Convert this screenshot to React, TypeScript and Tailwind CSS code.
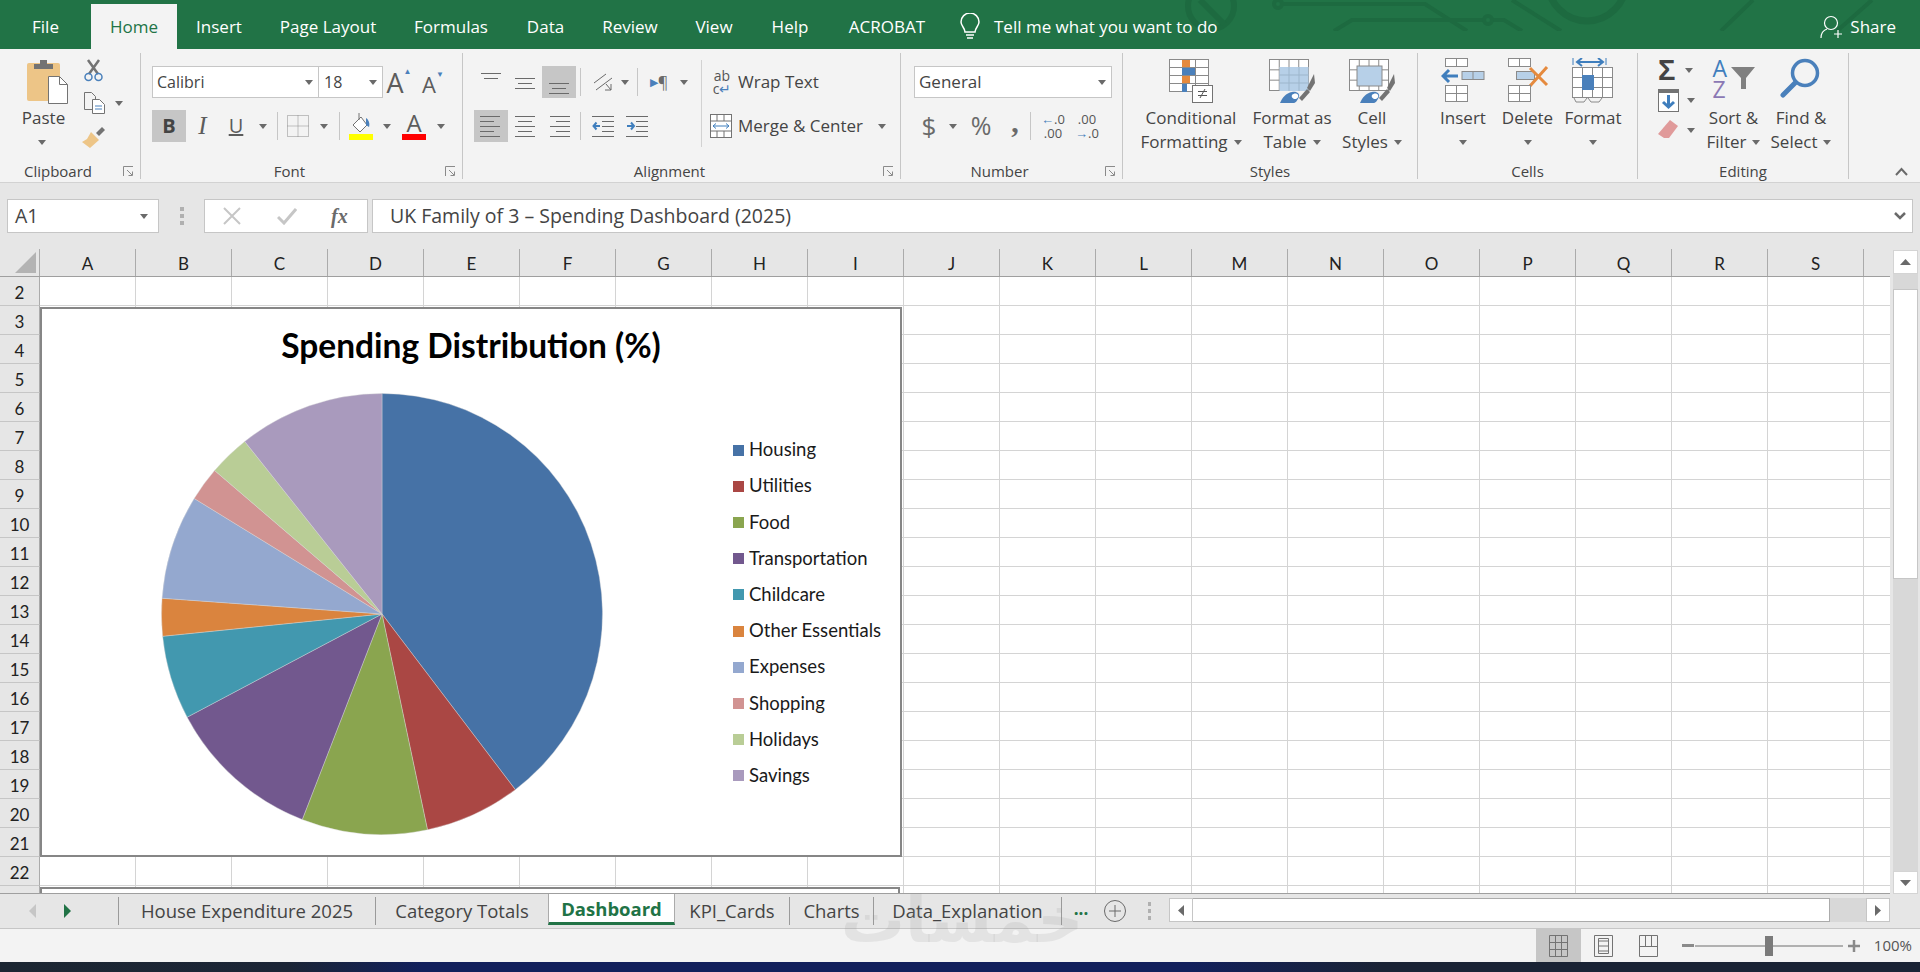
import type { ReactNode } from "react";

const TABS = [
  { label: "File", w: "w-[91px]" },
  { label: "Home", w: "w-[86px]", active: true },
  { label: "Insert", w: "w-[84px]" },
  { label: "Page Layout", w: "w-[134px]" },
  { label: "Formulas", w: "w-[112px]" },
  { label: "Data", w: "w-[77px]" },
  { label: "Review", w: "w-[92px]" },
  { label: "View", w: "w-[76px]" },
  { label: "Help", w: "w-[76px]" },
  { label: "ACROBAT", w: "w-[118px]" },
];

const COLS = "ABCDEFGHIJKLMNOPQRS".split("");
const ROWS = Array.from({ length: 22 }, (_, i) => i + 2);

const SLICES = [
  { name: "Housing", color: "#4672a6", end: 142.8 },
  { name: "Utilities", color: "#aa4744", end: 168.1 },
  { name: "Food", color: "#8aa54f", end: 201.2 },
  { name: "Transportation", color: "#72588e", end: 242.1 },
  { name: "Childcare", color: "#4298af", end: 264.2 },
  { name: "Other Essentials", color: "#da843e", end: 274.1 },
  { name: "Expenses", color: "#94a8cf", end: 301.6 },
  { name: "Shopping", color: "#d19392", end: 310.6 },
  { name: "Holidays", color: "#b9cd96", end: 321.5 },
  { name: "Savings", color: "#a99abd", end: 360 },
];

function slicePath(start: number, end: number) {
  const r = 220.5;
  const c = 221;
  const pt = (a: number) => {
    const t = (a * Math.PI) / 180;
    return `${(c + r * Math.sin(t)).toFixed(2)} ${(c - r * Math.cos(t)).toFixed(2)}`;
  };
  const large = end - start > 180 ? 1 : 0;
  return `M${c} ${c} L${pt(start)} A${r} ${r} 0 ${large} 1 ${pt(end)} Z`;
}

function Caret({ color = "#6a6a6a" }: { color?: string }) {
  return (
    <svg width="8" height="5" viewBox="0 0 8 5" className="shrink-0">
      <path d="M0 0h8L4 5z" fill={color} />
    </svg>
  );
}

function Launcher() {
  return (
    <svg width="11" height="11" viewBox="0 0 11 11" fill="none" stroke="#8a8a8a">
      <path d="M.5 10V.5H10" />
      <path d="M4 4l5 5M9.5 5.5v4h-4" />
    </svg>
  );
}

/* ── Ribbon group shell ─────────────────────────────────────── */
function Group({ w, label, launcher, children }: { w: string; label: string; launcher?: boolean; children: ReactNode }) {
  return (
    <div className={`${w} shrink-0 h-[126px] flex flex-col border-r border-[#c6c6c6]`}>
      <div className="h-[110px] flex">{children}</div>
      <div className="h-[16px] flex items-center text-[15px] text-[#444]">
        <span className="flex-1 text-center">{label}</span>
        {launcher && <span className="w-[24px] flex justify-center"><Launcher /></span>}
      </div>
    </div>
  );
}

function BigButton({ w, icon, lines }: { w: string; icon: ReactNode; lines: ReactNode[] }) {
  return (
    <div className={`${w} shrink-0 flex flex-col items-center`}>
      <div className="h-[53px] pt-[5px] flex justify-center">{icon}</div>
      {lines.map((l, i) => (
        <div key={i} className="h-[24px] flex items-center gap-[6px] text-[17px] text-[#444] whitespace-nowrap">{l}</div>
      ))}
    </div>
  );
}

function Cell({ w, on, children }: { w: string; on?: boolean; children?: ReactNode }) {
  return <div className={`${w} h-[32px] shrink-0 flex items-center justify-center ${on ? "bg-[#c6c6c6]" : ""}`}>{children}</div>;
}

function Sep({ ml = "ml-0", mr = "mr-0" }: { ml?: string; mr?: string }) {
  return <div className={`w-px h-[28px] bg-[#c6c6c6] shrink-0 ${ml} ${mr}`} />;
}

function LinesIcon({ lines }: { lines: [number, number, number][] }) {
  return (
    <svg width="22" height="24" viewBox="0 0 22 24" stroke="#6a6a6a" strokeWidth="1">
      {lines.map(([a, b, y], i) => <line key={i} x1={a} x2={b} y1={y + 0.5} y2={y + 0.5} />)}
    </svg>
  );
}

function IndentIcon({ flip }: { flip?: boolean }) {
  return (
    <svg width="22" height="24" viewBox="0 0 22 24" stroke="#6a6a6a">
      {[2, 22].map((y) => <line key={y} x1="0" x2="22" y1={y + 0.5} y2={y + 0.5} />)}
      {[7, 12, 17].map((y) => <line key={y} x1="10" x2="22" y1={y + 0.5} y2={y + 0.5} />)}
      <path d={flip ? "M1 12h6M5 8.5L8 12l-3 3.5" : "M8 12H2M4.5 8.5L1.5 12l3 3.5"} fill="none" stroke="#3f7ebd" strokeWidth="2" />
    </svg>
  );
}

/* ── Big ribbon icons ───────────────────────────────────────── */
function PasteIcon() {
  return (
    <svg width="42" height="45" viewBox="0 0 42 45">
      <rect x="0" y="4" width="33" height="38" rx="2" fill="#edc587" />
      <path d="M7 10V5h6V1h7v4h6v5z" fill="#737373" />
      <path d="M21.5 17.5h11l8 8v19h-19z" fill="#fff" stroke="#737373" />
      <path d="M32.5 17.5v8h8" fill="none" stroke="#737373" />
    </svg>
  );
}

function Grid({ x, y, w, h, cols, rows, stroke = "#8a8a8a" }: { x: number; y: number; w: number; h: number; cols: number; rows: number; stroke?: string }) {
  const cells = [];
  for (let i = 1; i < cols; i++) cells.push(<line key={`c${i}`} x1={x + (w * i) / cols} x2={x + (w * i) / cols} y1={y} y2={y + h} />);
  for (let i = 1; i < rows; i++) cells.push(<line key={`r${i}`} x1={x} x2={x + w} y1={y + (h * i) / rows} y2={y + (h * i) / rows} />);
  return (
    <g stroke={stroke} fill="none">
      <rect x={x} y={y} width={w} height={h} fill="#fff" />
      {cells}
    </g>
  );
}

function CondIcon() {
  return (
    <svg width="44" height="45" viewBox="0 0 44 45">
      <Grid x={0.5} y={1.5} w={39} h={32} cols={3} rows={4} />
      <rect x="13" y="2" width="8" height="7" fill="#e58a3e" />
      <rect x="13" y="10" width="13" height="7" fill="#4a80bb" />
      <rect x="13" y="18" width="8" height="7" fill="#e58a3e" />
      <rect x="13" y="26" width="5" height="8" fill="#4a80bb" />
      <rect x="23.5" y="27.5" width="20" height="17" fill="#fff" stroke="#737373" />
      <path d="M29 33.500h9M29 37.500h9M36 31l-5 9" stroke="#555" fill="none" />
    </svg>
  );
}

function Brush() {
  return (
    <g>
      <path d="M30 40l3 3 8-9-3-3z" fill="#737373" />
      <path d="M38 30l7-14 1 9-5 8z" fill="#737373" />
      <path d="M11 45c2-5 6-10 12-11 5-1 8 2 7 5-1 2-3 6-5 6z" fill="#4a80bb" />
      <path d="M23 37c2-2 5-2 6 0s-1 4-3 4-4-2-3-4z" fill="#fff" />
    </g>
  );
}

function FormatTableIcon() {
  return (
    <svg width="46" height="46" viewBox="0 0 46 46">
      <Grid x={0.5} y={1.5} w={39} h={31} cols={4} rows={3} />
      <rect x="10.5" y="9" width="29" height="24" fill="#b7d0e8" />
      <path d="M20 9v24M30 9v24M10 17h30M10 25h30" stroke="#9db6cc" />
      <Brush />
    </svg>
  );
}

function CellStylesIcon() {
  return (
    <svg width="46" height="46" viewBox="0 0 46 46">
      <Grid x={0.5} y={1.5} w={39} h={31} cols={4} rows={3} />
      <rect x="8" y="8" width="25" height="20" fill="#b7d0e8" stroke="#8a8a8a" />
      <Brush />
    </svg>
  );
}

function InsertIcon() {
  return (
    <svg width="44" height="45" viewBox="0 0 44 45">
      <Grid x={4.5} y={0.5} w={22} h={8} cols={2} rows={1} />
      <rect x="21" y="13.5" width="22" height="8" fill="#b7d0e8" stroke="#8a8a8a" />
      <path d="M32 13.5v8" stroke="#8a8a8a" />
      <path d="M17 18H3M8 12l-6 6 6 6" fill="none" stroke="#3f7ebd" strokeWidth="3" />
      <Grid x={4.5} y={27.5} w={22} h={16} cols={2} rows={2} />
    </svg>
  );
}

function DeleteIcon() {
  return (
    <svg width="44" height="45" viewBox="0 0 44 45">
      <Grid x={2.5} y={0.5} w={22} h={8} cols={2} rows={1} />
      <rect x="10.5" y="13.5" width="18" height="8" fill="#b7d0e8" stroke="#8a8a8a" />
      <path d="M24 10l17 17M41 9L24 28" stroke="#e58a3e" strokeWidth="3" fill="none" />
      <Grid x={2.5} y={27.5} w={22} h={16} cols={2} rows={2} />
    </svg>
  );
}

function FormatIcon() {
  return (
    <svg width="42" height="45" viewBox="0 0 42 45">
      <path d="M1 0v7M34 0v7" stroke="#3f7ebd" />
      <path d="M5 4h26M10 0L5 4l5 4M26 0l5 4-5 4" fill="none" stroke="#3f7ebd" strokeWidth="2" />
      <Grid x={0.5} y={9.5} w={40} h={30} cols={4} rows={3} />
      <rect x="10" y="17" width="12" height="15" fill="#4a80bb" />
      <path d="M2 40l2 4h8l3-4M16 40l3 4h8l3-4" fill="none" stroke="#8a8a8a" />
    </svg>
  );
}

function SortIcon() {
  return (
    <div className="flex h-[42px] items-start">
      <div className="flex flex-col w-[18px] text-[23px] leading-[21px]">
        <span className="text-[#3f7ebd]">A</span>
        <span className="text-[#8b78b4]">Z</span>
      </div>
      <svg width="24" height="24" viewBox="0 0 24 24" className="mt-[9px]">
        <path d="M0 0h24l-9 11v11h-5V11z" fill="#808080" />
      </svg>
    </div>
  );
}

function FindIcon() {
  return (
    <svg width="42" height="40" viewBox="0 0 42 40" fill="none" stroke="#4a80bb">
      <circle cx="25" cy="15" r="12.5" strokeWidth="3.5" />
      <path d="M15 25L3 37" strokeWidth="5" strokeLinecap="round" />
    </svg>
  );
}

/* ── Ribbon ─────────────────────────────────────────────────── */
function Ribbon() {
  return (
    <div className="h-[134px] bg-[#f3f3f3] border-b border-[#d2d2d2] pt-[4px] flex shrink-0">
      <Group w="w-[141px]" label="Clipboard" launcher>
        <div className="w-[84px] flex flex-col items-center">
          <div className="h-[53px] pt-[6px] pl-[12px]"><PasteIcon /></div>
          <div className="h-[24px] flex items-center text-[17px] text-[#444] ml-[3px]">Paste</div>
          <div className="h-[24px] flex items-center"><Caret /></div>
        </div>
        <div className="flex flex-col pt-[6px] w-[40px]">
          <svg width="20" height="23" viewBox="0 0 20 23" fill="none">
            <path d="M4 1l10 14M15 1L5 15" stroke="#737373" strokeWidth="2.5" />
            <circle cx="4.5" cy="18" r="3.5" stroke="#4a80bb" strokeWidth="1.5" />
            <circle cx="14.5" cy="18" r="3.5" stroke="#4a80bb" strokeWidth="1.5" />
          </svg>
          <div className="flex items-center gap-[10px] mt-[10px]">
            <svg width="21" height="22" viewBox="0 0 21 22" fill="none" stroke="#737373">
              <path d="M.5.5h7l4 4v13H.5z" fill="#f3f3f3" />
              <path d="M8.5 7.500h7l5 5v9h-12z" fill="#fff" />
              <path d="M11 14h7M11 17h7" stroke="#4a80bb" />
            </svg>
            <Caret />
          </div>
          <svg width="24" height="22" viewBox="0 0 24 22" className="mt-[13px] -ml-[2px]">
            <path d="M14 6l6-6 3 3-6 6z" fill="#737373" />
            <path d="M9 5l8 8-9 8-8-6 5-3z" fill="#edc587" />
          </svg>
        </div>
      </Group>

      <Group w="w-[322px]" label="Font" launcher>
        <div className="pl-[11px] pt-[13px] flex flex-col gap-[12px]">
          <div className="flex items-center">
            <div className="w-[167px] h-[32px] bg-white border border-[#c6c6c6] flex items-center justify-between pl-[4px] pr-[5px] text-[16px] text-[#444]">
              Calibri <Caret />
            </div>
            <div className="w-[64px] h-[32px] bg-white border border-l-0 border-[#c6c6c6] flex items-center justify-between pl-[5px] pr-[5px] text-[16px] text-[#444]">
              18 <Caret />
            </div>
            <div className="w-[32px] h-[30px] flex items-end justify-center text-[27px] leading-[28px] text-[#5c5c5c]">A<span className="self-start text-[#4a80bb] text-[8px] leading-none">▲</span></div>
            <div className="w-[32px] h-[30px] ml-[2px] flex items-end justify-center text-[22px] leading-[26px] text-[#5c5c5c]">A<span className="self-start mt-[3px] text-[#4a80bb] text-[8px] leading-none">▼</span></div>
          </div>
          <div className="flex items-center">
            <Cell w="w-[34px]" on><span className="text-[20px] font-bold text-[#444]">B</span></Cell>
            <Cell w="w-[33px]"><span className="font-['Liberation_Serif',serif] italic text-[25px] text-[#5c5c5c]">I</span></Cell>
            <Cell w="w-[34px]"><span className="underline text-[20px] text-[#5c5c5c]">U</span></Cell>
            <Cell w="w-[20px]"><Caret /></Cell>
            <Sep ml="ml-[4px]" mr="mr-[5px]" />
            <Cell w="w-[30px]">
              <svg width="22" height="22" viewBox="0 0 22 22" fill="none" stroke="#8a8a8a" strokeDasharray="1 1">
                <path d="M.5.5h21v21H.5zM11 .5v21M.5 11h21" />
              </svg>
            </Cell>
            <Cell w="w-[22px]"><Caret /></Cell>
            <Sep ml="ml-[4px]" mr="mr-[5px]" />
            <Cell w="w-[32px]">
              <svg width="24" height="28" viewBox="0 0 24 28">
                <path d="M4 13l8-8 6 8-7 7z" fill="#fff" stroke="#737373" />
                <path d="M10 1v7" stroke="#737373" />
                <path d="M17 6c3 2 4 6 3 9l-3-2z" fill="#4a80bb" />
                <rect y="22" width="24" height="6" fill="#ffff00" />
              </svg>
            </Cell>
            <Cell w="w-[20px]"><Caret /></Cell>
            <Cell w="w-[34px]">
              <div className="flex flex-col items-center">
                <span className="text-[24px] leading-[22px] text-[#5c5c5c]">A</span>
                <div className="w-[24px] h-[6px] bg-[#ff0000]" />
              </div>
            </Cell>
            <Cell w="w-[20px]"><Caret /></Cell>
          </div>
        </div>
      </Group>

      <Group w="w-[438px]" label="Alignment" launcher>
        <div className="w-[238px] pl-[11px] pt-[13px] flex flex-col gap-[12px]">
          <div className="flex items-center">
            <Cell w="w-[34px]"><LinesIcon lines={[[1, 21, 3], [4, 18, 8]]} /></Cell>
            <Cell w="w-[34px]"><LinesIcon lines={[[1, 21, 8], [4, 18, 13], [1, 21, 18]]} /></Cell>
            <Cell w="w-[34px]" on><LinesIcon lines={[[1, 21, 13], [4, 18, 18], [1, 21, 23]]} /></Cell>
            <Sep ml="ml-[4px]" mr="mr-[5px]" />
            <Cell w="w-[34px]">
              <svg width="24" height="24" viewBox="0 0 24 24" fill="none" stroke="#6a6a6a">
                <path d="M3 13l12-9M5 20l16-12M15 14l5 6M20 14v6h-6" />
              </svg>
            </Cell>
            <Cell w="w-[10px]"><Caret /></Cell>
            <Sep ml="ml-[7px]" mr="mr-[7px]" />
            <Cell w="w-[28px]"><span className="text-[#4a80bb] text-[11px]">▶</span><span className="text-[16px] text-[#6a6a6a]">¶</span></Cell>
            <Cell w="w-[22px]"><Caret /></Cell>
          </div>
          <div className="flex items-center">
            <Cell w="w-[34px]" on><LinesIcon lines={[[0, 20, 2], [0, 14, 7], [0, 20, 12], [0, 14, 17], [0, 20, 22]]} /></Cell>
            <Cell w="w-[34px]"><LinesIcon lines={[[1, 21, 2], [4, 18, 7], [1, 21, 12], [4, 18, 17], [1, 21, 22]]} /></Cell>
            <Cell w="w-[34px]"><LinesIcon lines={[[2, 22, 2], [8, 22, 7], [2, 22, 12], [8, 22, 17], [2, 22, 22]]} /></Cell>
            <Sep ml="ml-[4px]" mr="mr-[5px]" />
            <Cell w="w-[34px]"><IndentIcon /></Cell>
            <Cell w="w-[34px]"><IndentIcon flip /></Cell>
          </div>
        </div>
        <div className="w-px h-[87px] bg-[#d2d2d2] mt-[7px] shrink-0" />
        <div className="pt-[13px] pl-[8px] flex flex-col gap-[12px] text-[17px] text-[#444]">
          <div className="h-[32px] flex items-center gap-[5px] pl-[1px]">
            <span className="w-[22px] text-[14px] leading-[13px] text-[#555] text-center">ab<br />c<span className="text-[#4a80bb]">↵</span></span>
            <span>Wrap Text</span>
          </div>
          <div className="h-[32px] flex items-center gap-[6px]">
            <svg width="22" height="24" viewBox="0 0 22 24" fill="none" stroke="#737373">
              <rect x=".5" y=".5" width="21" height="23" fill="#fff" />
              <path d="M.5 7h21M.5 17h21M7 .5V7M14 .5V7M7 17v6.5M14 17v6.5" />
              <path d="M3 12h16M6 9.5L3 12l3 2.5M16 9.5l3 2.5-3 2.5" stroke="#3f7ebd" />
            </svg>
            <span className="whitespace-nowrap">Merge &amp; Center</span>
            <span className="ml-[9px]"><Caret /></span>
          </div>
        </div>
      </Group>

      <Group w="w-[222px]" label="Number" launcher>
        <div className="pl-[13px] pt-[13px] flex flex-col gap-[12px]">
          <div className="w-[198px] h-[32px] bg-white border border-[#c6c6c6] flex items-center justify-between pl-[4px] pr-[5px] text-[17px] text-[#444]">
            General <Caret />
          </div>
          <div className="flex items-center text-[#6a6a6a]">
            <Cell w="w-[30px]"><span className="text-[26px]">$</span></Cell>
            <Cell w="w-[18px]"><Caret /></Cell>
            <Cell w="w-[38px]"><span className="text-[25px]">%</span></Cell>
            <Cell w="w-[30px]"><span className="text-[30px] font-bold font-['Liberation_Serif',serif] -mt-[10px]">,</span></Cell>
            <Sep ml="ml-[0px]" mr="mr-[5px]" />
            <Cell w="w-[34px]">
              <div className="text-[13px] leading-[14px] text-center text-[#555]"><span className="text-[#4a80bb] font-bold">←</span>.0<br />.00</div>
            </Cell>
            <Cell w="w-[34px]">
              <div className="text-[13px] leading-[14px] text-center text-[#555]">.00<br /><span className="text-[#4a80bb] font-bold">→</span>.0</div>
            </Cell>
          </div>
        </div>
      </Group>

      <Group w="w-[295px]" label="Styles">
        <div className="pl-[13px] flex">
          <BigButton w="w-[110px]" icon={<CondIcon />} lines={["Conditional", <>Formatting <Caret /></>]} />
          <BigButton w="w-[92px]" icon={<FormatTableIcon />} lines={["Format as", <>Table <Caret /></>]} />
          <BigButton w="w-[68px]" icon={<CellStylesIcon />} lines={["Cell", <>Styles <Caret /></>]} />
        </div>
      </Group>

      <Group w="w-[220px]" label="Cells">
        <div className="pl-[13px] flex">
          <BigButton w="w-[64px]" icon={<InsertIcon />} lines={["Insert", <Caret />]} />
          <BigButton w="w-[65px]" icon={<DeleteIcon />} lines={["Delete", <Caret />]} />
          <BigButton w="w-[66px]" icon={<FormatIcon />} lines={["Format", <Caret />]} />
        </div>
      </Group>

      <Group w="w-[211px]" label="Editing">
        <div className="w-[62px] pl-[20px] pt-[5px] flex flex-col">
          <div className="h-[24px] flex items-center gap-[10px]">
            <span className="text-[29px] leading-none font-bold text-[#444] font-['Liberation_Sans',sans-serif]">Σ</span>
            <Caret />
          </div>
          <div className="h-[30px] mt-[3px] flex items-center gap-[8px]">
            <svg width="21" height="23" viewBox="0 0 21 23" className="shrink-0">
              <rect x=".5" y=".5" width="20" height="22" fill="#fff" stroke="#737373" />
              <rect width="21" height="4" fill="#737373" />
              <path d="M10.500 6v12M5 13l5.500 5 5.500-5" fill="none" stroke="#3f7ebd" strokeWidth="3" />
            </svg>
            <Caret />
          </div>
          <div className="h-[30px] flex items-center gap-[8px]">
            <svg width="21" height="20" viewBox="0 0 21 20" className="shrink-0">
              <path d="M12 0l8 6-9 12H6L0 14z" fill="#e09a9a" />
            </svg>
            <Caret />
          </div>
        </div>
        <BigButton w="w-[67px]" icon={<SortIcon />} lines={["Sort &", <>Filter <Caret /></>]} />
        <BigButton w="w-[68px]" icon={<FindIcon />} lines={["Find &", <>Select <Caret /></>]} />
      </Group>

      <div className="flex-1 h-[126px] flex items-end justify-end pr-[12px] pb-[3px]">
        <svg width="13" height="9" viewBox="0 0 13 9" fill="none" stroke="#6a6a6a" strokeWidth="2">
          <path d="M1 8l5.500-6L12 8" />
        </svg>
      </div>
    </div>
  );
}

/* ── Sheet ──────────────────────────────────────────────────── */
function PieChart() {
  let start = 0;
  return (
    <div className="absolute left-[40px] top-[58px] w-[862px] h-[550px] bg-white border-2 border-[#868686] font-['Lato',sans-serif]">
      <div className="h-[84px] pt-[12px] text-center text-[33.5px] leading-[48px] font-bold text-black">Spending Distribution (%)</div>
      <div className="flex">
        <svg width="442" height="442" viewBox="0 0 442 442" className="ml-[119px] shrink-0">
          {SLICES.map((s) => {
            const d = slicePath(start, s.end);
            start = s.end;
            return <path key={s.name} d={d} fill={s.color} stroke="#d9d9d9" strokeWidth="0.4" />;
          })}
        </svg>
        <div className="ml-[130px] mt-[39px]">
          {SLICES.map((s) => (
            <div key={s.name} className="h-[36.2px] flex items-center gap-[5px] text-[18.5px] text-[#1a1a1a] whitespace-nowrap">
              <span className="w-[11px] h-[11px] shrink-0" style={{ backgroundColor: s.color }} />
              {s.name}
            </div>
          ))}
        </div>
      </div>
    </div>
  );
}

function Sheet() {
  return (
    <div className="h-[645px] flex shrink-0">
      <div className="relative flex-1 overflow-hidden bg-white border-b border-[#9f9f9f] font-['Lato',sans-serif]">
        <div className="h-[28px] flex bg-[#e6e6e6] border-b border-[#9f9f9f] text-[17px] text-[#222]">
          <div className="w-[40px] shrink-0 border-r border-[#ababab] flex items-end justify-end pr-[3px] pb-[3px]">
            <svg width="21" height="21" viewBox="0 0 21 21"><path d="M21 0v21H0z" fill="#b3b3b3" /></svg>
          </div>
          {COLS.map((c) => (
            <div key={c} className="w-[96px] shrink-0 border-r border-[#ababab] flex items-center justify-center pt-[3px]">{c}</div>
          ))}
        </div>
        {ROWS.map((r) => (
          <div key={r} className="h-[29px] flex">
            <div className="w-[40px] shrink-0 bg-[#e6e6e6] border-r border-b border-r-[#ababab] border-b-[#c6c6c6] flex items-center justify-center pt-[3px] text-[17px] text-[#222]">
              {r === 23 ? "" : r}
            </div>
            {COLS.map((c) => (
              <div key={c} className="w-[96px] shrink-0 border-r border-b border-[#d4d4d4]" />
            ))}
            <div className="flex-1 border-b border-[#d4d4d4]" />
          </div>
        ))}
        <PieChart />
        <div className="absolute left-[40px] top-[638px] w-[860px] h-[40px] bg-white border-2 border-[#868686]" />
      </div>

      <div className="w-[30px] shrink-0 bg-[#e6e6e6] flex flex-col items-center pt-[1px]">
        <div className="w-[25px] h-[24px] bg-white border border-[#d4d4d4] flex items-center justify-center">
          <svg width="11" height="6" viewBox="0 0 11 6"><path d="M0 6h11L5.500 0z" fill="#6a6a6a" /></svg>
        </div>
        <div className="flex-1 w-[25px] bg-[#d8d8d8] pt-[15px]">
          <div className="h-[290px] bg-white border border-[#c6c6c6]" />
        </div>
        <div className="w-[25px] h-[23px] bg-white border border-[#d4d4d4] flex items-center justify-center">
          <svg width="11" height="6" viewBox="0 0 11 6"><path d="M0 0h11L5.500 6z" fill="#6a6a6a" /></svg>
        </div>
      </div>
    </div>
  );
}

function SheetTab({ w, label }: { w: string; label: string }) {
  return (
    <div className={`${w} h-[28px] mt-[3px] shrink-0 flex items-center justify-center border-r border-[#9a9a9a] text-[#444] text-[18.5px] whitespace-nowrap`}>
      {label}
    </div>
  );
}

function TabBar() {
  return (
    <div className="relative h-[35px] bg-[#e6e6e6] border-b border-[#c6c6c6] flex shrink-0">
      <div className="w-[119px] h-[28px] mt-[3px] shrink-0 flex items-center border-r border-[#9a9a9a]">
        <svg width="7" height="14" viewBox="0 0 7 14" className="ml-[29px]"><path d="M7 0v14L0 7z" fill="#c6c6c6" /></svg>
        <svg width="7" height="14" viewBox="0 0 7 14" className="ml-[28px]"><path d="M0 0v14l7-7z" fill="#217346" /></svg>
      </div>
      <SheetTab w="w-[257px]" label="House Expenditure 2025" />
      <div className="w-[172px] h-[28px] mt-[3px] shrink-0 flex items-center justify-center text-[#444] text-[18.5px]">Category Totals</div>
      <div className="w-[127px] h-[31px] shrink-0 bg-white border-x border-[#ababab] border-b-[3px] border-b-[#217346] flex items-center justify-center pt-[2px] text-[18.5px] font-bold text-[#217346]">
        Dashboard
      </div>
      <SheetTab w="w-[115px]" label="KPI_Cards" />
      <SheetTab w="w-[84px]" label="Charts" />
      <SheetTab w="w-[188px]" label="Data_Explanation" />
      <div className="w-[42px] shrink-0 flex items-center justify-center text-[#217346] font-bold text-[17px] pb-[4px] pr-[4px]">...</div>
      <div className="w-[22px] h-[22px] mt-[6px] shrink-0 rounded-full border border-[#6a6a6a] flex items-center justify-center">
        <svg width="12" height="12" viewBox="0 0 12 12" stroke="#6a6a6a"><path d="M6 0v12M0 6h12" /></svg>
      </div>
      <div className="w-[4px] mt-[8px] ml-[22px] flex flex-col gap-[3px] shrink-0">
        {[0, 1, 2].map((i) => <span key={i} className="w-[3px] h-[4px] bg-[#b0b0b0]" />)}
      </div>
      <div className="w-[24px] h-[24px] mt-[4px] ml-[17px] shrink-0 bg-white border border-[#c6c6c6] flex items-center justify-center">
        <svg width="6" height="11" viewBox="0 0 6 11"><path d="M6 0v11L0 5.500z" fill="#6a6a6a" /></svg>
      </div>
      <div className="w-[637px] h-[24px] mt-[4px] shrink-0 bg-white border border-l-0 border-[#ababab]" />
      <div className="w-[36px] h-[24px] mt-[4px] shrink-0 bg-[#d8d8d8]" />
      <div className="w-[24px] h-[24px] mt-[4px] shrink-0 bg-white border border-[#c6c6c6] flex items-center justify-center">
        <svg width="6" height="11" viewBox="0 0 6 11"><path d="M0 0v11l6-5.500z" fill="#6a6a6a" /></svg>
      </div>
    </div>
  );
}

function StatusBar() {
  return (
    <div className="h-[33px] bg-[#f3f3f3] flex justify-end shrink-0 text-[#555]">
      <div className="w-[45px] bg-[#c6c6c6] flex items-center justify-center">
        <svg width="19" height="22" viewBox="0 0 19 22" fill="none" stroke="#737373"><path d="M.5.5h18v21H.5zM6.500.5v21M12.500.5v21M.5 7.500h18M.5 14.500h18" /></svg>
      </div>
      <div className="w-[45px] flex items-center justify-center">
        <svg width="19" height="22" viewBox="0 0 19 22" fill="none" stroke="#737373"><path d="M.5.5h18v21H.5zM5 6h9M5 11h9M5 16h9M4.500 3.500h10v15h-10z" /></svg>
      </div>
      <div className="w-[45px] flex items-center justify-center">
        <svg width="19" height="22" viewBox="0 0 19 22" fill="none" stroke="#737373"><path d="M.5.5h18v21H.5zM6.500.5v11M12.500.5v11M.5 11.500h18" /></svg>
      </div>
      <div className="w-[12px] ml-[11px] flex items-center">
        <div className="w-[12px] h-[3px] bg-[#8a8a8a]" />
      </div>
      <div className="w-[148px] ml-[1px] flex items-center relative">
        <div className="w-full h-[2px] bg-[#b0b0b0]" />
        <div className="absolute left-[70px] w-[8px] h-[20px] bg-[#7a7a7a]" />
      </div>
      <div className="w-[12px] ml-[5px] flex items-center">
        <svg width="12" height="12" viewBox="0 0 12 12" stroke="#8a8a8a" strokeWidth="2.500"><path d="M6 0v12M0 6h12" /></svg>
      </div>
      <div className="w-[60px] flex items-center justify-end pr-[8px] text-[15px]">100%</div>
    </div>
  );
}

export default function App() {
  return (
    <div className="relative w-[1920px] h-[972px] overflow-hidden flex flex-col bg-[#f3f3f3] font-['Open_Sans',sans-serif]">
      {/* ── Title bar with tabs ─────────────────────────────────── */}
      <div className="relative h-[49px] bg-[#217346] flex items-end shrink-0 text-white text-[17px]">
        <svg width="1920" height="31" viewBox="0 0 1920 31" fill="none" stroke="#1d6a40" strokeWidth="4" className="absolute left-0 top-0">
          <circle cx="1211" cy="6" r="23" strokeWidth="6" />
          <path d="M1200 0l24 24" strokeWidth="6" />
          <circle cx="1278" cy="4" r="4" />
          <path d="M1282 4h143l42 27" />
          <path d="M1334 31l18-11h132M1492 20h12l18 11" />
          <circle cx="1488" cy="20" r="4" />
          <path d="M1512 0l49 31" />
          <circle cx="1587" cy="-18" r="39" strokeWidth="7" />
          <path d="M1753 0l-32 31M1872 0l-35 31" />
        </svg>
        {TABS.map((t) => (
          <div
            key={t.label}
            className={`${t.w} relative h-[45px] shrink-0 flex items-center justify-center ${t.active ? "bg-[#f3f3f3] text-[#217346]" : ""}`}
          >
            {t.label}
          </div>
        ))}
        <div className="relative h-[45px] flex items-center ml-[13px] gap-[13px]">
          <svg width="22" height="28" viewBox="0 0 22 28" fill="none" stroke="#fff" strokeWidth="1.500">
            <path d="M6 19c0-4-4-6-4-10a9 9 0 0 1 18 0c0 4-4 6-4 10zM7 22h8M8 25h6" />
          </svg>
          <span className="whitespace-nowrap">Tell me what you want to do</span>
        </div>
        <div className="relative h-[45px] flex items-center gap-[7px] ml-auto pr-[24px]">
          <svg width="23" height="24" viewBox="0 0 23 24" fill="none" stroke="#fff" strokeWidth="1.200">
            <circle cx="11" cy="8" r="6.500" />
            <path d="M1 23c0-5 3-8 6-9M14 19h8M18 15v8" />
          </svg>
          <span>Share</span>
        </div>
      </div>

      <Ribbon />

      {/* ── Formula bar ─────────────────────────────────────────── */}
      <div className="h-[66px] bg-[#e6e6e6] shrink-0 pt-[16px] pl-[7px] pr-[7px] flex items-start text-[19.5px] text-[#444]">
        <div className="w-[152px] h-[34px] bg-white border border-[#c6c6c6] flex items-center justify-between pl-[7px] pr-[10px]">
          A1 <Caret />
        </div>
        <div className="w-[45px] h-[34px] flex flex-col items-center justify-center gap-[3px]">
          {[0, 1, 2].map((i) => <span key={i} className="w-[4px] h-[4px] bg-[#b0b0b0]" />)}
        </div>
        <div className="w-[164px] h-[34px] bg-white border border-[#c6c6c6] flex items-center shrink-0">
          <svg width="18" height="18" viewBox="0 0 18 18" stroke="#c6c6c6" strokeWidth="2" className="ml-[18px]"><path d="M1 1l16 16M17 1L1 17" /></svg>
          <svg width="20" height="18" viewBox="0 0 20 18" fill="none" stroke="#c6c6c6" strokeWidth="3" className="ml-[36px]"><path d="M1 10l6 6L19 2" /></svg>
          <span className="ml-[34px] font-['Liberation_Serif',serif] italic font-bold text-[20px] text-[#6a6a6a]">fx</span>
        </div>
        <div className="flex-1 h-[34px] ml-[4px] bg-white border border-[#c6c6c6] flex items-center justify-between pl-[17px] pr-[6px]">
          <span>UK Family of 3 – Spending Dashboard (2025)</span>
          <svg width="12" height="8" viewBox="0 0 12 8" fill="none" stroke="#6a6a6a" strokeWidth="2.500"><path d="M1 1l5 5 5-5" /></svg>
        </div>
      </div>

      <Sheet />
      <TabBar />
      <StatusBar />
      <div className="flex-1 bg-[linear-gradient(90deg,#1c2632_0%,#1b2536_15%,#12205c_22%,#12205c_62%,#1a2335_72%,#1a2335_100%)]" />

      {/* watermark over the tab strip */}
      <div className="absolute left-[848px] top-[884px] w-[228px] h-[72px] flex items-center justify-center pointer-events-none font-['DejaVu_Sans',sans-serif] text-[64px] font-bold leading-none text-[#8a8a8a]/15" dir="rtl">
        خمسات
      </div>
    </div>
  );
}
